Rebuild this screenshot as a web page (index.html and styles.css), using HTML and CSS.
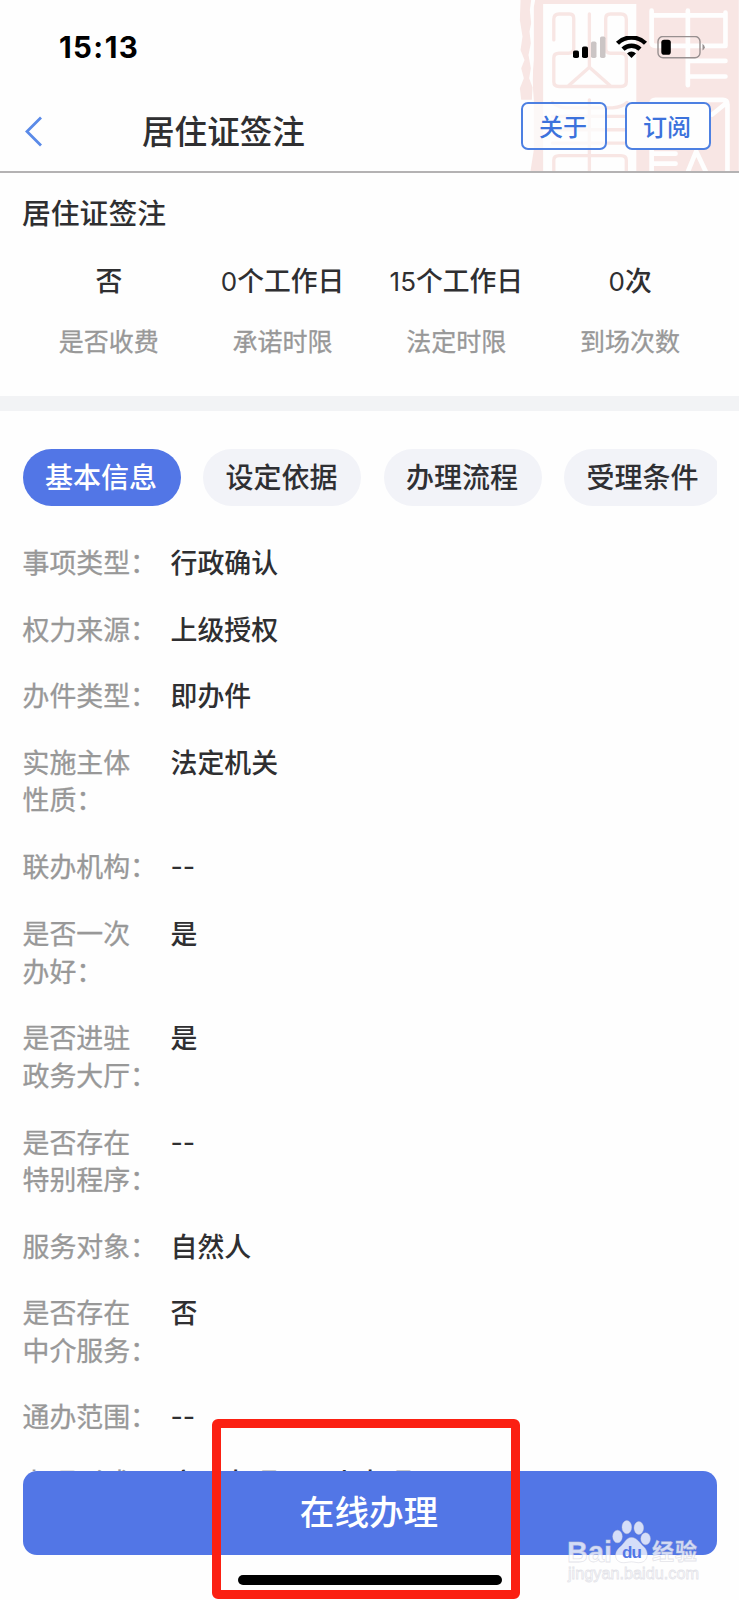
FILE: index.html
```
<!DOCTYPE html>
<html lang="zh-CN">
<head>
  <meta charset="utf-8">
  <title>居住证签注</title>
  <meta name="viewport" content="width=device-width, initial-scale=1.0">
  <link rel="stylesheet" href="styles.css">
</head>
<body>
  <header class="top">
    <!-- 印章背景 -->
    <svg class="seal" viewBox="0 0 720 514">
      <g fill="#f8e6e4">
        <path d="M64 0H96L92 30 96 70 91 95 95 130 88 165 95 205 90 235 100 262 98 300H66L62 265 74 235 66 205 76 180 64 150 70 110 62 60Z"/>
        <path d="M108 0H720V514H412V12H132V514H94L104 450 104 300Q98 240 104 180V20Z"/>
      </g>
      <g fill="none" stroke="#f8e6e4" stroke-width="10" stroke-linecap="round" stroke-linejoin="round">
        <path d="M164 120V58Q164 42 180 42H212Q224 42 224 56V145Q224 160 208 160H180Q164 160 164 174V246Q164 260 180 260H366Q382 260 382 246V174Q382 160 366 160H334Q320 160 320 145V56Q320 42 334 42H366Q382 42 382 58V120"/>
        <path d="M271 42V200M210 256L271 202 332 256M271 300V514M160 308Q180 326 210 324H340Q370 322 384 308M160 350H380M160 390H380M160 430H380M164 514V482Q164 468 180 468H366Q382 468 382 482V514"/>
      </g>
      <g fill="none" stroke="#fefefe" stroke-width="14" stroke-linecap="round" stroke-linejoin="round">
        <path d="M458 32V128Q458 138 470 138H680V38M458 46H680M567 32V256M572 183H680M572 230H680"/>
        <path d="M458 514V312Q458 300 470 300H672Q686 300 686 314V514M640 344L680 312M462 462H530M462 492H530M568 514L592 455 620 514"/>
      </g>
    </svg>
    <div class="status-bar">
      <span class="time">15:13</span>
      <svg class="status-icons" viewBox="0 0 132 24">
        <rect x="0" y="14.5" width="6" height="7.5" rx="1.8"/>
        <rect x="9" y="10.5" width="6" height="11.5" rx="1.8"/>
        <g fill="#cbc5c5">
          <rect x="18" y="5.5" width="5.5" height="16.5" rx="1.8"/>
          <rect x="27" y="0.5" width="5.5" height="21.5" rx="1.8"/>
        </g>
        <g fill="none" stroke="#000" stroke-width="4.4">
          <path d="M44.5 7.3A20 20 0 0 1 72.5 7.3"/>
          <path d="M50 13.2A12.3 12.3 0 0 1 67 13.2"/>
        </g>
        <path d="M58.5 22L54 17.4A6.5 6.5 0 0 1 63 17.4Z"/>
        <rect x="85" y="0.5" width="42" height="21.2" rx="5" fill="none" stroke="#989090" stroke-width="1.4"/>
        <rect x="88.3" y="3.7" width="9.5" height="15" rx="2.8"/>
        <path d="M129.5 7.8Q134 11.2 129.5 14.6Z" fill="#989090"/>
      </svg>
    </div>
    <div class="nav">
      <svg class="back" viewBox="0 0 18 32">
        <path d="M16 1.5L2 15.5 16 29.5" fill="none" stroke="#5a8ae8" stroke-width="2.8"/>
      </svg>
      <h1>居住证签注</h1>
      <button class="nav-button">关于</button>
      <button class="nav-button">订阅</button>
    </div>
  </header>

  <section class="summary">
    <h2>居住证签注</h2>
    <div class="stats">
      <div class="stat"><b>否</b><span>是否收费</span></div>
      <div class="stat"><b><i>0</i>个工作日</b><span>承诺时限</span></div>
      <div class="stat"><b><i>15</i>个工作日</b><span>法定时限</span></div>
      <div class="stat"><b><i>0</i>次</b><span>到场次数</span></div>
    </div>
  </section>

  <div class="tabs">
    <button class="tab active">基本信息</button>
    <button class="tab">设定依据</button>
    <button class="tab">办理流程</button>
    <button class="tab">受理条件</button>
  </div>

  <dl class="info">
    <div class="row"><dt>事项类型&#xFF1A;</dt><dd>行政确认</dd></div>
    <div class="row"><dt>权力来源&#xFF1A;</dt><dd>上级授权</dd></div>
    <div class="row"><dt>办件类型&#xFF1A;</dt><dd>即办件</dd></div>
    <div class="row"><dt>实施主体<br>性质&#xFF1A;</dt><dd>法定机关</dd></div>
    <div class="row"><dt>联办机构&#xFF1A;</dt><dd class="empty">--</dd></div>
    <div class="row"><dt>是否一次<br>办好&#xFF1A;</dt><dd>是</dd></div>
    <div class="row"><dt>是否进驻<br>政务大厅&#xFF1A;</dt><dd>是</dd></div>
    <div class="row"><dt>是否存在<br>特别程序&#xFF1A;</dt><dd class="empty">--</dd></div>
    <div class="row"><dt>服务对象&#xFF1A;</dt><dd>自然人</dd></div>
    <div class="row"><dt>是否存在<br>中介服务&#xFF1A;</dt><dd>否</dd></div>
    <div class="row"><dt>通办范围&#xFF1A;</dt><dd class="empty">--</dd></div>
    <div class="row"><dt>办理形式&#xFF1A;</dt><dd>窗口办理&#xFF0C;网上办理</dd></div>
  </dl>

  <footer class="bottom">
    <button class="submit">在线办理</button>
    <div class="home-bar"></div>
  </footer>

  <div class="highlight"></div>

  <svg class="watermark" viewBox="0 0 140 68">
    <g fill="#fff" fill-opacity="0.76" stroke="#c8c8d4" stroke-opacity="0.5" stroke-width="0.8">
      <text class="wm-logo" x="4" y="46" textLength="45" lengthAdjust="spacingAndGlyphs">Bai</text>
      <ellipse cx="54.5" cy="20.5" rx="4.8" ry="6.3"/>
      <ellipse cx="63.8" cy="11.2" rx="4.8" ry="6.6"/>
      <ellipse cx="75.8" cy="12" rx="4.8" ry="6.4"/>
      <ellipse cx="82.6" cy="22.8" rx="4.8" ry="6"/>
      <path d="M68.5 21.5C74 21.5 76.5 27 81 31S86 45 78 46.5C74 47.3 72 45.8 68.5 45.8S62 47.3 58 46.5C50 44 52 35 57 31S63 21.5 68.5 21.5Z"/>
      <text class="wm-name" x="89" y="43" textLength="45">经验</text>
      <text class="wm-url" x="5" y="63" textLength="131" lengthAdjust="spacingAndGlyphs">jingyan.baidu.com</text>
    </g>
    <text class="wm-du" x="59" y="42" textLength="20">du</text>
  </svg>
</body>
</html>
```

FILE: styles.css
```
* {
  box-sizing: border-box;
}
body {
  position: relative;
  height: 1600px;
  margin: 0;
  overflow: hidden;
  background-color: #fefefe;
  color: #2f2f31;
  font-family: "Noto Sans CJK SC", sans-serif;
}
h1, h2, dl, dd {
  margin: 0;
}
h1, h2, b {
  font-weight: 500;
}
button {
  padding: 0;
  border: none;
  font-family: inherit;
  font-weight: 500;
  white-space: nowrap;
}
.top {
  position: relative;
  height: 173px;
  border-bottom: 2px solid #b4b2b3;
}
.seal {
  position: absolute;
  top: 0;
  right: 0;
  width: 240px;
  height: 171px;
}
.status-bar {
  position: relative;
  display: flex;
  justify-content: space-between;
  align-items: center;
  height: 94px;
  padding: 0 34px 0 59px;
}
.time {
  color: #000;
  font-family: Inter, sans-serif;
  font-size: 29.5px;
  font-weight: 700;
  letter-spacing: 1.4px;
}
.status-icons {
  width: 132px;
  height: 24px;
  margin-top: 2px;
}
.nav {
  position: relative;
  display: flex;
  align-items: center;
  height: 77px;
  padding: 0 28px 3px 25px;
}
.back {
  width: 18px;
  height: 32px;
  margin-top: 2px;
}
.nav h1 {
  flex: 1;
  padding: 0 0 3px 99px;
  font-size: 32.6px;
  line-height: 40px;
}
.nav-button {
  width: 86px;
  height: 48px;
  margin: -11px 0 0 18px;
  padding: 0 2px 1px 0;
  border: 2px solid #4d80e2;
  border-radius: 7px;
  background-color: rgba(254, 254, 254, 0.75);
  color: #3c72dc;
  font-size: 24px;
}
.nav-button:last-child {
  background-color: #fefefe;
}
.summary {
  height: 238px;
  padding: 19px 22px 0;
  border-bottom: 15px solid #f2f3f5;
}
.summary h2 {
  font-size: 28.8px;
  line-height: 40px;
}
.stats {
  display: flex;
  margin-top: 28px;
}
.stat {
  flex: 1;
  text-align: center;
}
.stat b {
  display: block;
  height: 40px;
  font-size: 26.8px;
  line-height: 40px;
}
.stat i {
  font-family: Inter, sans-serif;
  font-size: 26px;
  font-style: normal;
  font-weight: 400;
  line-height: 1;
}
.stat span {
  display: block;
  margin-top: 20px;
  color: #989898;
  font-size: 25px;
  line-height: 40px;
  -webkit-text-stroke: 0.3px;
}
.tabs {
  display: flex;
  gap: 22.5px;
  margin: 38px 22.5px 0;
  overflow: hidden;
}
.tab {
  flex: none;
  width: 158px;
  height: 57px;
  padding: 0 1px 3px 0;
  border-radius: 29px;
  background-color: #f2f3f8;
  color: #2f2f33;
  font-size: 28px;
}
.tab.active {
  background-color: #5276e6;
  color: #fff;
}
.info {
  padding: 37.4px 22.5px 0;
  font-size: 26.9px;
  line-height: 37.8px;
}
.row {
  display: flex;
  margin-bottom: 28.6px;
}
/* 最后一行只从按钮上方露出一点 */
.row:last-child {
  margin-top: -30.6px;
  padding-top: 28.6px;
}
.row dt {
  flex: none;
  width: 148px;
  color: #989898;
  -webkit-text-stroke: 0.3px;
}
.row dd {
  font-weight: 500;
}
.row dd.empty {
  padding-top: 1px;
  font-family: Inter, sans-serif;
  font-weight: 400;
}
.bottom {
  position: absolute;
  left: 0;
  right: 0;
  bottom: 0;
  height: 129px;
  padding: 0 22.5px;
  background-color: #fefefe;
}
.submit {
  width: 100%;
  height: 83.5px;
  padding: 0 1px 6px 0;
  border-radius: 14px;
  background-color: #5276e6;
  color: #fff;
  font-size: 34.6px;
}
.home-bar {
  width: 264px;
  height: 10px;
  margin: 20.5px auto 0;
  border-radius: 5px;
  background-color: #000;
}
.highlight {
  position: absolute;
  left: 212px;
  top: 1419px;
  width: 308px;
  height: 180px;
  border: 9px solid #fb2012;
  border-radius: 6px;
}
.watermark {
  position: absolute;
  left: 563px;
  top: 1516px;
  width: 140px;
  height: 68px;
}
.wm-logo {
  font: bold 30px "Liberation Sans", sans-serif;
}
.wm-name {
  font: bold 22px "Noto Sans CJK SC", sans-serif;
}
.wm-url {
  font: 16px "Liberation Sans", sans-serif;
}
.wm-du {
  fill: #5276e6;
  font: bold 17px "Liberation Sans", sans-serif;
}
```
